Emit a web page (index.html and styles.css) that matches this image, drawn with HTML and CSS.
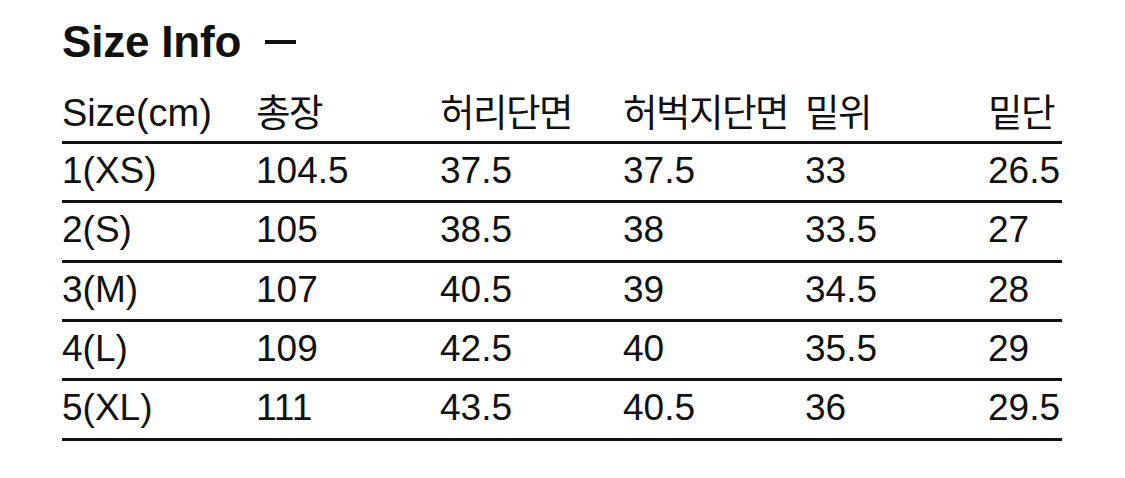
FILE: index.html
```html
<!DOCTYPE html>
<html lang="ko">
<head>
<meta charset="utf-8">
<title>Size Info</title>
<link rel="stylesheet" href="styles.css">
</head>
<body>
<main class="sheet">
  <h1 class="title">Size Info <span class="collapse" aria-label="collapse"></span></h1>
  <div class="table">
    <div class="row head">
      <div class="cell">Size(cm)</div>
      <div class="cell ko">총장</div>
      <div class="cell ko">허리단면</div>
      <div class="cell ko">허벅지단면</div>
      <div class="cell ko">밑위</div>
      <div class="cell ko">밑단</div>
    </div>
    <div class="row">
      <div class="cell">1(XS)</div><div class="cell">104.5</div><div class="cell">37.5</div><div class="cell">37.5</div><div class="cell">33</div><div class="cell">26.5</div>
    </div>
    <div class="row">
      <div class="cell">2(S)</div><div class="cell">105</div><div class="cell">38.5</div><div class="cell">38</div><div class="cell">33.5</div><div class="cell">27</div>
    </div>
    <div class="row">
      <div class="cell">3(M)</div><div class="cell">107</div><div class="cell">40.5</div><div class="cell">39</div><div class="cell">34.5</div><div class="cell">28</div>
    </div>
    <div class="row">
      <div class="cell">4(L)</div><div class="cell">109</div><div class="cell">42.5</div><div class="cell">40</div><div class="cell">35.5</div><div class="cell">29</div>
    </div>
    <div class="row">
      <div class="cell">5(XL)</div><div class="cell">111</div><div class="cell">43.5</div><div class="cell">40.5</div><div class="cell">36</div><div class="cell">29.5</div>
    </div>
  </div>
</main>
</body>
</html>
```
FILE: styles.css
```css
* { box-sizing: border-box; }
html, body { margin: 0; padding: 0; background: #fff; }
body {
  width: 1125px;
  height: 478px;
  overflow: hidden;
  font-family: "Liberation Sans", "Noto Sans CJK KR", Arial, sans-serif;
  color: #111;
}
.sheet {
  padding: 19.5px 0 0 62px;
  width: 1062px;
}
.title {
  margin: 0;
  font-size: 44px;
  line-height: 44px;
  font-weight: 700;
  letter-spacing: -0.2px;
  display: flex;
  align-items: center;
  gap: 24px;
  height: 44px;
}
.collapse {
  display: inline-block;
  width: 31px;
  height: 4px;
  background: #111;
}
.table {
  margin-top: 21px;
  width: 1000px;
}
.row {
  display: grid;
  grid-template-columns: 194px 184px 183px 182px 183px 74px;
  border-bottom: 3px solid #111;
  height: 59.4px;
  padding-bottom: 3.2px;
  font-size: 37px;
  line-height: 53.2px;
}
.row.head {
  padding-bottom: 0;
  line-height: 56.4px;
  font-size: 38px;
}
.cell {
  white-space: nowrap;
}
.cell.ko {
  font-size: 37.5px;
  letter-spacing: -1.5px;
}
```
